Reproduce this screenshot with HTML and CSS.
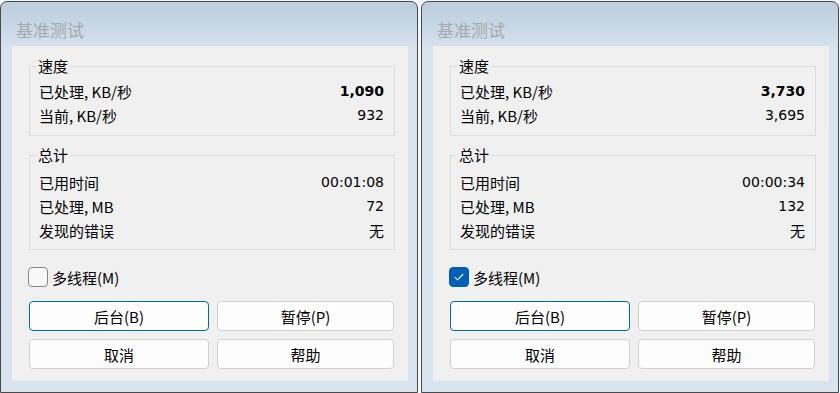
FILE: index.html
```html
<!DOCTYPE html>
<html lang="zh-CN">
<head>
    <meta charset="UTF-8">
    <meta name="viewport" content="width=device-width, initial-scale=1.0">
    <title>基准测试</title>
    <link rel="stylesheet" href="styles.css">
</head>
<body>
    <div class="screen">
        <!-- janela 1: sem multithread -->
        <div class="dialog">
            <div class="titlebar">基准测试</div>
            <div class="client">
                <fieldset class="group speed">
                    <legend>速度</legend>
                    <div class="row"><span>已处理, KB/秒</span><span class="num strong">1,090</span></div>
                    <div class="row"><span>当前, KB/秒</span><span class="num">932</span></div>
                </fieldset>
                <fieldset class="group total">
                    <legend>总计</legend>
                    <div class="row"><span>已用时间</span><span class="num">00:01:08</span></div>
                    <div class="row"><span>已处理, MB</span><span class="num">72</span></div>
                    <div class="row"><span>发现的错误</span><span class="cjk">无</span></div>
                </fieldset>
                <div class="check">
                    <span class="box"></span>
                    <span>多线程(M)</span>
                </div>
                <div class="buttons">
                    <button class="btn focus">后台(B)</button>
                    <button class="btn">暂停(P)</button>
                    <button class="btn">取消</button>
                    <button class="btn">帮助</button>
                </div>
            </div>
        </div>

        <!-- janela 2: multithread ligado -->
        <div class="dialog">
            <div class="titlebar">基准测试</div>
            <div class="client">
                <fieldset class="group speed">
                    <legend>速度</legend>
                    <div class="row"><span>已处理, KB/秒</span><span class="num strong">3,730</span></div>
                    <div class="row"><span>当前, KB/秒</span><span class="num">3,695</span></div>
                </fieldset>
                <fieldset class="group total">
                    <legend>总计</legend>
                    <div class="row"><span>已用时间</span><span class="num">00:00:34</span></div>
                    <div class="row"><span>已处理, MB</span><span class="num">132</span></div>
                    <div class="row"><span>发现的错误</span><span class="cjk">无</span></div>
                </fieldset>
                <div class="check">
                    <span class="box checked">
                        <svg width="12" height="10" viewBox="0 0 12 10"><path d="M1.8 5.2 L4.6 7.8 L10.2 2" fill="none" stroke="#fff" stroke-width="1.1"/></svg>
                    </span>
                    <span>多线程(M)</span>
                </div>
                <div class="buttons">
                    <button class="btn focus">后台(B)</button>
                    <button class="btn">暂停(P)</button>
                    <button class="btn">取消</button>
                    <button class="btn">帮助</button>
                </div>
            </div>
        </div>
    </div>
</body>
</html>
```
FILE: styles.css
```css
body {
    margin: 0;
    padding: 0;
    background-color: #f4f7fa;
    font-family: "Noto Sans CJK SC", "Noto Sans", sans-serif;
    color: #000;
}
.screen {
    display: flex;
    gap: 3px;
    padding-top: 1px;
}
.dialog {
    width: 418px;
    height: 392px;
    box-sizing: border-box;
    border: 1px solid #4a4a4a;
    border-radius: 7px 7px 0 0;
    background: linear-gradient(#bccddc 0, #ccdae7 30px, #d7e3ef 46px, #d8e4f0 100%);
}
.titlebar {
    height: 44px;
    box-sizing: border-box;
    padding: 17px 0 0 15px;
    font-size: 17px;
    line-height: 22px;
    color: #a5a9ad;
}
.client {
    margin-left: 11px;
    width: 396px;
    height: 335px;
    box-sizing: border-box;
    padding: 11px 0 0 17px;
    background-color: #f0f0f0;
}
.group {
    width: 366px;
    box-sizing: border-box;
    margin: 0 0 10px 0;
    padding: 4px 10px 8px 9px;
    border: 1px solid #dcdcdc;
}
.group legend {
    font-size: 15px;
    line-height: 18px;
    padding: 0 2px;
    margin-left: -3px;
}
.total {
    padding-top: 6px;
    padding-bottom: 7px;
}
.row {
    display: flex;
    justify-content: space-between;
    align-items: center;
    height: 24px;
    font-size: 15px;
}
.num {
    font-family: "DejaVu Sans", sans-serif;
    font-size: 14px;
    color: #000;
}
.strong {
    font-weight: bold;
}
.cjk {
    font-size: 15px;
}
.check {
    display: flex;
    align-items: center;
    gap: 4px;
    margin: 17px 0 0 -1px;
    height: 20px;
    font-size: 15px;
}
.box {
    width: 20px;
    height: 20px;
    box-sizing: border-box;
    border: 1px solid #878787;
    border-radius: 4px;
    background-color: #f8f8f8;
    display: flex;
    align-items: center;
    justify-content: center;
}
.box.checked {
    background-color: #005fb8;
    border-color: #005fb8;
}
.buttons {
    display: grid;
    grid-template-columns: 180px 177px;
    gap: 8px;
    margin-top: 14px;
}
.btn {
    height: 30px;
    padding: 0;
    border: 1px solid #d0d0d0;
    border-radius: 4px;
    background-color: #fdfdfd;
    font-family: "Noto Sans CJK SC", "Noto Sans", sans-serif;
    font-size: 15px;
    color: #000;
}
.btn.focus {
    border-color: #0067c0;
}
```
